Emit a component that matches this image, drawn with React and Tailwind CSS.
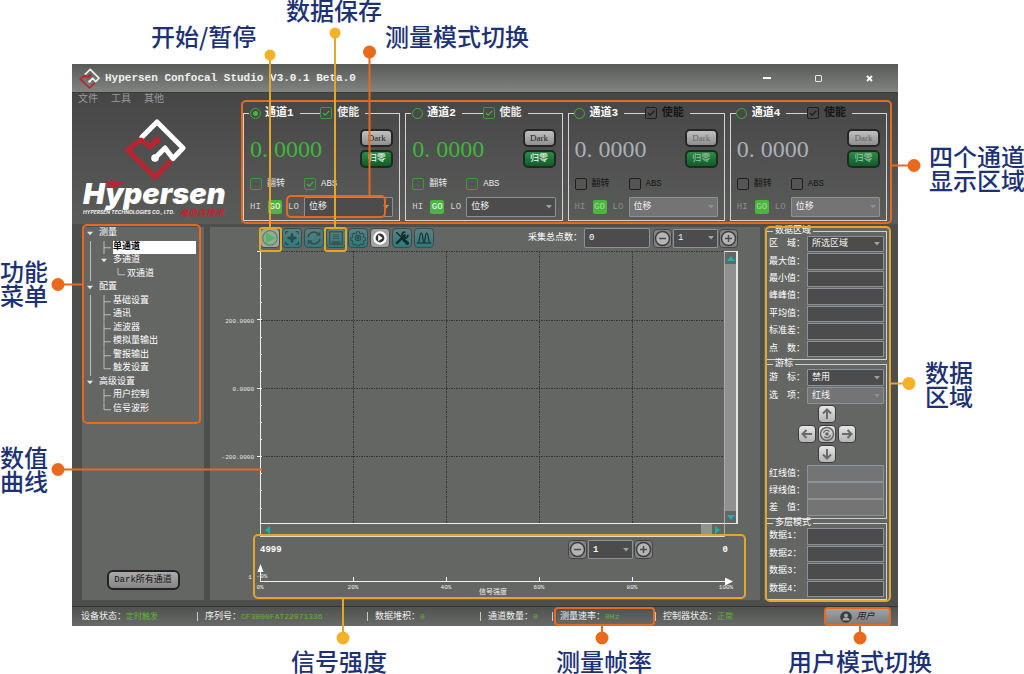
import React, { useState } from "react";

const MONO = "font-['Liberation_Mono','Noto_Sans_CJK_SC',monospace]";

function Tick({ name, label, checked = false, tone = "green", size = "small" }) {
  const box = tone === "green" ? "border-[#3f9a3c]" : "border-[#1f1f1f]";
  const stroke = tone === "green" ? "#46b043" : "#1c1c1c";
  const big = size === "large";
  const ink = tone === "green" ? "text-[#e9e9e9]" : "text-[#161616]";
  return (
    <label className={`flex items-center gap-[5px] whitespace-nowrap ${ink} ${big ? "text-[11px] leading-3 font-bold" : "text-[9px] leading-3"}`}>
      <span className="grid h-3 w-3 shrink-0">
        <input
          type="checkbox"
          name={name}
          defaultChecked={checked}
          className={`peer col-start-1 row-start-1 h-3 w-3 appearance-none rounded-[2px] border ${box}`}
        />
        <svg viewBox="0 0 12 12" className="pointer-events-none col-start-1 row-start-1 h-3 w-3 opacity-0 peer-checked:opacity-100">
          <path d="M3 6l2.2 2.2L9.4 3.6" fill="none" stroke={stroke} strokeWidth="1.2" />
        </svg>
      </span>
      {label}
    </label>
  );
}

function Drop({ label, value, className = "", dim = false }) {
  return (
    <span className={`grid ${className}`}>
      <select
        aria-label={label}
        defaultValue={value}
        className={`col-start-1 row-start-1 h-full w-full min-w-0 appearance-none rounded-[1px] border border-[#8d929a] pl-1 text-[9px] leading-3 text-[#f2f2f2] ${dim ? "bg-[#747474]" : "bg-[#4c4c4c]"}`}
      >
        <option>{value}</option>
      </select>
      <svg viewBox="0 0 6 4" className="pointer-events-none col-start-1 row-start-1 mr-1 h-1 w-[6px] self-center justify-self-end">
        <path d="M0 0h6L3 3.5z" fill={dim ? "#8f8f8f" : "#a0a0a0"} />
      </svg>
    </span>
  );
}

const channels = [
  { n: 1, active: true, enabled: true, abs: true },
  { n: 2, active: false, enabled: true, abs: false },
  { n: 3, active: false, enabled: false, abs: false },
  { n: 4, active: false, enabled: false, abs: false },
];

function Channel({ n, active, enabled, abs }) {
  const tone = enabled ? "green" : "black";
  return (
    <section className="flex min-w-0 flex-1 flex-col">
      <div className="z-10 flex h-3 items-center">
        <i className="h-px w-[6px] bg-[#d4d4d4]" />
        <label className="flex items-center gap-1 text-[11px] leading-3 font-bold text-white">
          <span className="grid h-3 w-3 place-items-center">
            <input type="radio" name="channel" defaultChecked={active} className="peer col-start-1 row-start-1 h-[11px] w-[11px] appearance-none rounded-full border border-[#3bb039]" />
            <i className="pointer-events-none col-start-1 row-start-1 h-[5px] w-[5px] rounded-full bg-[#43b740] opacity-0 peer-checked:opacity-100" />
          </span>
          <span>通道{n}</span>
        </label>
        <i className="ml-[6px] h-px flex-1 bg-[#d4d4d4]" />
        <Tick name={`enable${n}`} label="使能" checked tone={tone} size="large" />
        <i className="ml-[6px] h-px w-[35px] bg-[#d4d4d4]" />
      </div>
      <div className="-mt-[6px] flex flex-1 flex-col border-x border-b border-[#d4d4d4] pt-4 pr-[6px] pl-[6px]">
        <div className="flex h-[39px] items-center justify-between">
          <output className={`font-['Liberation_Serif',serif] text-[24px] leading-6 ${enabled ? "text-[#3db63a]" : "text-[#a9b0b8]"}`}>
            0.<span className="pl-[6px]">0000</span>
          </output>
          <div className="flex flex-col gap-[3px]">
            <button className={`h-[18px] w-[33px] rounded-[5px] border-2 border-[#262626] bg-linear-to-b from-[#c0c0c0] to-[#8f8f8f] font-['Liberation_Serif',serif] text-[9px] leading-3 ${enabled ? "text-[#222]" : "text-[#666]"}`}>Dark</button>
            <button className={`h-[18px] w-[33px] rounded-[5px] border-2 border-[#1d2b20] bg-linear-to-b from-[#2f8a48] to-[#125c2b] text-[9px] leading-3 ${enabled ? "text-white" : "text-[#a9c8b0]"}`}>归零</button>
          </div>
        </div>
        <div className="mt-[10px] flex h-3 items-center">
          <span className="w-[54px]"><Tick name={`flip${n}`} label="翻转" tone={tone} /></span>
          <Tick name={`abs${n}`} label="ABS" checked={abs} tone={tone} />
        </div>
        <div className={`mt-[7px] flex h-5 items-center text-[9px] leading-3 ${enabled ? "text-[#d0d0d0]" : "text-[#8c8c8c]"}`}>
          <span className="w-[18px]">HI</span>
          <span className={`h-[14px] w-[14px] rounded-[2px] bg-[#49b63c] text-center leading-[14px] ${enabled ? "text-white" : "text-[#a5dc9e]"}`}>GO</span>
          <span className="w-[22px] pl-[6px]">LO</span>
          <Drop label={`通道${n} 测量模式`} value="位移" dim={!enabled} className="h-5 flex-1" />
        </div>
      </div>
    </section>
  );
}

function Mark({ className, plain = "#fff" }) {
  return (
    <svg viewBox="0 0 62 62" className={className} fill="none" strokeWidth="5" strokeLinecap="round" strokeLinejoin="round">
      <path d="M18 19L33 4l26 26-10 10.500L41 30l-9.500 9.500" stroke={plain} />
      <path d="M32 22.500L26.500 29 17 22 3.500 32 31 59l14.500-14.500" stroke="#b9252f" />
      <circle cx="32.500" cy="22.500" r="3.800" fill="#b9252f" />
      <circle cx="31" cy="40" r="3.800" fill={plain} />
    </svg>
  );
}

const tree = [
  { t: "测量", d: 0, open: true },
  { t: "单通道", d: 1, selected: true, rail: true },
  { t: "多通道", d: 1, open: true, rail: true },
  { t: "双通道", d: 2, last: true, rail: true },
  { t: "配置", d: 0, open: true },
  { t: "基础设置", d: 1, rail: true },
  { t: "通讯", d: 1, rail: true },
  { t: "滤波器", d: 1, rail: true },
  { t: "模拟量输出", d: 1, rail: true },
  { t: "警报输出", d: 1, rail: true },
  { t: "触发设置", d: 1, last: true, rail: true },
  { t: "高级设置", d: 0, open: true },
  { t: "用户控制", d: 1 },
  { t: "信号波形", d: 1, last: true },
];

function Branch({ open, last }) {
  return (
    <svg viewBox="0 0 14 14" preserveAspectRatio="none" className="h-full w-[14px] shrink-0">
      {open ? (
        <path d="M2 5h6L5 8.5z" fill="#e4e4e4" />
      ) : (
        <path d={last ? "M5 0v7h7" : "M5 0v14M5 7h7"} fill="none" stroke="#bdbdbd" />
      )}
    </svg>
  );
}

function Sidebar() {
  const [picked, setPicked] = useState("单通道");
  return (
    <nav className="flex w-[122px] shrink-0 flex-col items-center justify-between bg-[#646664] pb-[10px]">
      <ul className="flex h-[189px] w-full flex-col pl-[3px]">
        {tree.map((r) => (
          <li key={r.t} className="flex min-h-0 flex-1 items-center">
            {r.d > 0 && (
              <span className="flex h-full w-[14px] shrink-0 pl-[5px]">{r.rail && <i className="w-px bg-[#bdbdbd]" />}</span>
            )}
            {r.d > 1 && <span className="w-[14px] shrink-0" />}
            <Branch open={r.open} last={r.last} />
            <button
              onClick={() => setPicked(r.t)}
              className={`h-[13px] text-left text-[9px] leading-[13px] whitespace-nowrap ${picked === r.t ? "mr-2 flex-1 bg-white font-bold text-black" : "text-white"}`}
            >
              {r.t}
            </button>
          </li>
        ))}
      </ul>
      <button className="h-5 w-[73px] rounded-[6px] border-2 border-[#222] bg-linear-to-b from-[#ababab] to-[#858585] text-[9px] leading-3 text-[#141414]">Dark所有通道</button>
    </nav>
  );
}

const tools = [
  { name: "开始", tone: "gray", art: <><circle cx="10" cy="10" r="8" fill="#9aa89a" stroke="#3f8e4c" strokeWidth="1.2" /><path d="M5.500 4l11 6-11 6z" fill="#56b566" /></> },
  { name: "居中", tone: "teal", art: <g fill="none" stroke="#1c4548" strokeWidth="1.1"><path d="M3 6V3h3M14 3h3v3M17 14v3h-3M6 17H3v-3M10 5v10M5 10h10" /><path d="M10 5l1.500 2h-3zM10 15l-1.500-2h3zM5 10l2-1.500v3zM15 10l-2 1.500v-3z" fill="#1c4548" strokeWidth="0.500" /><circle cx="10" cy="10" r="2.200" /></g> },
  { name: "刷新", tone: "teal", art: <g fill="none" stroke="#3b4c4c" strokeWidth="2"><path d="M3.500 9a6.500 6.500 0 0 1 11.500-3M16.500 11a6.500 6.500 0 0 1-11.500 3" /><path d="M12 7.500h5v-5zM8 12.500H3v5z" fill="#3b4c4c" stroke="none" /></g> },
  { name: "保存", tone: "teal", art: <g fill="none" stroke="#3d5453" strokeWidth="1.500"><path d="M3 3h14v14H3z" /><path d="M6.500 6.500h7M6.500 8.500h7M6.500 10.500h7" strokeWidth="1" /><path d="M6 17v-3h8v3" fill="#3d5453" /></g> },
  { name: "设置", tone: "teal", art: <g fill="none" stroke="#285153" strokeWidth="1.300" strokeLinejoin="round"><path d="M8.500 2.500h3l.5 2 1.600.7 1.800-1.100 2 2-1 1.800.6 1.600 2 .5v3l-2 .5-.6 1.500 1 1.800-2 2-1.800-1-1.600.6-.5 1.600h-3l-.5-1.600-1.600-.6-1.800 1-2-2 1-1.800-.6-1.500-2-.5v-3l2-.5.6-1.600-1-1.800 2-2 1.800 1.100L8 4.500z" transform="translate(1 .8) scale(.9)" /><circle cx="10" cy="10" r="3" /><circle cx="10" cy="10" r="1" fill="#285153" /></g> },
  { name: "播放", tone: "gray", art: <><circle cx="10" cy="10" r="6.200" fill="#333" stroke="#fff" strokeWidth="2.600" /><path d="M8 6.500l5 3.500-5 3.500z" fill="#fff" /></> },
  { name: "工具", tone: "teal", art: <g stroke="#152a2c" strokeLinecap="round" fill="none"><path d="M4 4l5 5" strokeWidth="1.500" /><path d="M11 11l5 5" strokeWidth="3.500" /><path d="M4.500 15.500L13 7" strokeWidth="2.600" /><path d="M13 3.500a3.200 3.200 0 1 0 3.500 3.500" strokeWidth="2" /></g> },
  { name: "波形", tone: "teal", art: <path d="M2 15.500h1.500C5 15.500 5 4.500 7 4.500s1.500 11 3 11 1-11 3-11 2 11 3.500 11H18M2 15.500h16" fill="none" stroke="#122a2c" strokeWidth="1.200" /> },
];

function RoundButton({ sign }) {
  return (
    <button aria-label={sign === "+" ? "增加" : "减少"} className="h-[19px] w-[19px] rounded-[4px] border border-[#444] bg-[#828382]">
      <svg viewBox="0 0 17 17" className="h-full w-full" fill="none">
        <circle cx="8.500" cy="8.500" r="7" fill="#b4b4b4" stroke="#3d3d3d" strokeWidth="1.500" />
        <path d={sign === "+" ? "M5 8.500h7M8.500 5v7" : "M5 8.500h7"} stroke="#4b4b4b" strokeWidth="1.500" />
      </svg>
    </button>
  );
}

function Stepper({ label }) {
  return (
    <div className="flex h-[19px] items-center gap-px">
      <RoundButton sign="-" />
      <Drop label={label} value="1" className="h-[19px] w-[45px]" />
      <RoundButton sign="+" />
    </div>
  );
}

function Plot() {
  const minor = Array.from({ length: 16 }, (_, i) => Math.round(i * 17.1));
  return (
    <svg viewBox="0 0 514 273" className="min-w-0 flex-1" role="img" aria-label="数值曲线">
      <g stroke="#343634" strokeDasharray="2 1 1 1" shapeRendering="crispEdges">
        {[143, 236, 329, 422].map((x) => <path key={x} d={`M${x}.5 0V272`} />)}
        {[0, 69, 137, 205].map((y) => <path key={y} d={`M51 ${y}.5H514`} />)}
      </g>
      <g stroke="#f1f1f1" shapeRendering="crispEdges">
        <path d="M50.500 0V273M50 272.500H514" />
        {minor.map((y, i) => <path key={y} d={`M${i % 4 ? 50 : 47} ${y}.5H52`} />)}
      </g>
      <g fill="#e8e8e8" fontSize="6" textAnchor="end">
        <text x="44" y="72">200.0000</text>
        <text x="44" y="140">0.0000</text>
        <text x="44" y="208">-200.0000</text>
      </g>
    </svg>
  );
}

function Strength() {
  return (
    <svg viewBox="0 0 550 37" className="block w-full" role="img" aria-label="信号强度">
      <g stroke="#f4f4f4" fill="#fff" shapeRendering="crispEdges">
        <path d="M50.500 8V21.500H516" fill="none" />
        {[143, 236, 329, 422].map((x) => <path key={x} d={`M${x}.5 17v4`} />)}
      </g>
      <path d="M50.500 4l-3 8h6zM523 21.500l-8-4v8z" fill="#fff" />
      <g fill="#efefef" fontSize="6" textAnchor="middle">
        <text x="40" y="19">1</text>
        <text x="52" y="18">-0%</text>
        <text x="50" y="29">0%</text>
        <text x="143" y="29">20%</text>
        <text x="236" y="29">40%</text>
        <text x="329" y="29">60%</text>
        <text x="422" y="29">80%</text>
        <text x="516" y="29">100%</text>
        <text x="283" y="34" fontSize="7">信号强度</text>
      </g>
    </svg>
  );
}

function Center() {
  return (
    <main className="flex min-w-0 flex-1 flex-col bg-[#646664] pt-px">
      <div className="flex h-5 items-center pr-[22px] pl-[50px]">
        <div className="flex gap-[2px]">
          {tools.map((t) => (
            <button key={t.name} aria-label={t.name} className={`h-5 w-5 rounded-[4px] border border-[#3f4a4a] ${t.tone === "teal" ? "bg-linear-to-b from-[#598080] to-[#2d797b]" : "bg-[#a3a3a3]"}`}>
              <svg viewBox="0 0 20 20" className="h-full w-full">{t.art}</svg>
            </button>
          ))}
        </div>
        <label className="ml-auto flex items-center gap-[2px] text-[9px] leading-3 text-white">
          采集总点数：
          <input defaultValue="0" className="h-5 w-[66px] rounded-[2px] border border-[#8d929a] bg-[#4c4c4c] pl-1 text-[9px] text-white" />
        </label>
        <div className="ml-[3px]"><Stepper label="横轴倍率" /></div>
      </div>
      <div className="mt-[3px] flex pr-[22px]">
        <Plot />
        <div className="flex w-[14px] flex-col items-center border border-r-2 border-[#e4e4e4] border-l-[#a8a8a8]">
          <button aria-label="向上滚动" className="flex h-3 w-full items-center justify-center"><svg viewBox="0 0 8 5" className="h-[5px] w-2"><path d="M4 0l4 5H0z" fill="#18b3b0" /></svg></button>
          <i className="w-full flex-1 bg-[#8f908f]" />
          <button aria-label="向下滚动" className="flex h-3 w-full items-center justify-center"><svg viewBox="0 0 8 5" className="h-[5px] w-2"><path d="M0 0h8L4 5z" fill="#18b3b0" /></svg></button>
        </div>
      </div>
      <div className="mr-[35px] ml-[50px] flex h-[13px] items-center border-r border-b border-l border-[#dcdcdc] border-r-[#a8a8a8] px-1">
        <button aria-label="向左滚动"><svg viewBox="0 0 5 8" className="block h-2 w-[5px]"><path d="M5 0v8L0 4z" fill="#18b3b0" /></svg></button>
        <i className="ml-auto h-3 w-[11px] bg-[#939393]" />
        <button aria-label="向右滚动" className="ml-[3px]"><svg viewBox="0 0 5 8" className="block h-2 w-[5px]"><path d="M0 0v8l5-4z" fill="#18b3b0" /></svg></button>
      </div>
      <div className="mt-[3px] flex h-[19px] items-center pr-[32px] pl-[50px] text-[9px] leading-3 font-bold text-white">
        <span className="flex-1">4999</span>
        <Stepper label="强度倍率" />
        <span className="w-[75px] text-right">0</span>
      </div>
      <div className="mt-px"><Strength /></div>
    </main>
  );
}

function Group({ title, children, className = "" }) {
  return (
    <fieldset className={`mx-[2px] min-w-0 border border-[#d0d0d0] border-l-transparent px-[2px] pb-[2px] ${className}`}>
      <legend className="ml-1 h-[9px] px-[2px] text-[9px] leading-[9px] text-white">{title}</legend>
      {children}
    </fieldset>
  );
}

function Field({ label, dim = false, choice }) {
  return (
    <label className="flex min-h-0 flex-1 items-center text-[9px] leading-3 text-white">
      <span className="w-[38px] shrink-0 whitespace-nowrap">{label}</span>
      {choice ? (
        <Drop label={label} value={choice} dim={dim} className="h-full flex-1" />
      ) : (
        <input disabled={dim} className={`h-full min-w-0 flex-1 border border-[#8d929a] ${dim ? "bg-[#747474]" : "bg-[#4c4c4c]"}`} />
      )}
    </label>
  );
}

function PadButton({ name, d, className }) {
  return (
    <button aria-label={name} className={`h-[18px] w-[18px] rounded-[4px] border border-[#3d3d3d] bg-linear-to-b from-[#e6e6e6] to-[#b4b4b4] ${className}`}>
      <svg viewBox="0 0 16 16" className="h-full w-full" fill="none" stroke="#6a6a6a" strokeWidth="2">
        {d ? <path d={d} /> : <><circle cx="8" cy="8" r="6.500" strokeWidth="1.500" /><path d="M4.500 7a3.500 3.500 0 0 1 6-1.500M11.500 9a3.500 3.500 0 0 1-6 1.500" strokeWidth="1.200" /><circle cx="8" cy="8" r="1.800" fill="#6a6a6a" stroke="none" /></>}
      </svg>
    </button>
  );
}

function DataPanel() {
  return (
    <aside className="flex w-[125px] shrink-0 flex-col bg-[#646664]">
      <Group title="数据区域">
        <div className="flex h-[121px] flex-col gap-px">
          <Field label="区　域：" choice="所选区域" />
          {["最大值：", "最小值：", "峰峰值：", "平均值：", "标准差：", "点　数："].map((l) => <Field key={l} label={l} />)}
        </div>
      </Group>
      <Group title="游标">
        <div className="flex h-[35px] flex-col gap-px">
          <Field label="游　标：" choice="禁用" />
          <Field label="选　项：" choice="红线" dim />
        </div>
        <div className="mx-auto mt-px mb-[2px] grid w-[58px] grid-cols-3 gap-[2px]">
          <PadButton name="上" d="M8 13V4M4 7.500L8 3.500l4 4" className="col-start-2" />
          <PadButton name="左" d="M13 8H4M7.500 4L3.500 8l4 4" className="col-start-1" />
          <PadButton name="复位" />
          <PadButton name="右" d="M3 8h9M8.500 4l4 4-4 4" />
          <PadButton name="下" d="M8 3v9M4 8.500l4 4 4-4" className="col-start-2" />
        </div>
        <div className="flex h-[51px] flex-col">
          {["红线值：", "绿线值：", "差　值："].map((l) => <Field key={l} label={l} dim />)}
        </div>
      </Group>
      <Group title="多层模式">
        <div className="flex h-[69px] flex-col gap-px">
          {["数据1：", "数据2：", "数据3：", "数据4："].map((l) => <Field key={l} label={l} />)}
        </div>
      </Group>
    </aside>
  );
}

function Status({ name, value, className, first }) {
  return (
    <div className={`flex items-center whitespace-nowrap ${className}`}>
      {!first && <i className="mr-[7px] h-[9px] w-px bg-[#c8c8c8]" />}
      <span>{name}：</span>
      <span className="text-[8px] text-[#5fb52e]">{value}</span>
    </div>
  );
}

function Note({ children, className }) {
  return (
    <p className={`absolute font-['Noto_Sans_CJK_SC',sans-serif] text-[24px] leading-6 font-medium whitespace-nowrap text-[#1d3175] ${className}`}>{children}</p>
  );
}

function Callouts() {
  return (
    <>
      <svg viewBox="0 0 1024 674" className="pointer-events-none absolute inset-0 z-20 h-[674px] w-[1024px]" fill="none" strokeWidth="2">
        <g stroke="#e5691f">
          <rect x="242" y="101" width="649" height="122" rx="4" />
          <rect x="287" y="196" width="98" height="21" rx="4" />
          <rect x="83" y="225" width="117" height="198" rx="4" />
          <rect x="555" y="608" width="99" height="17" rx="3" />
          <rect x="825" y="608" width="65" height="17" rx="3" />
          <path d="M369.500 52V196M891 165.500h20M58 284.500h25M58 469.500h204M602 625v12M860 625v12" />
        </g>
        <g stroke="#e2a62b">
          <rect x="260" y="228" width="21" height="23" rx="2" />
          <rect x="325" y="228" width="21" height="23" rx="2" />
          <rect x="254" y="535" width="491" height="63" rx="4" />
          <rect x="766" y="227" width="124" height="374" rx="4" />
          <path d="M270 55V228M335 36V228M890 383.500h18M343 598v40" />
        </g>
        <g fill="#e96a1d" stroke="none">
          <circle cx="369.500" cy="52" r="6.500" /><circle cx="914" cy="165.500" r="6.500" /><circle cx="58" cy="284.500" r="6.500" />
          <circle cx="58" cy="469.500" r="6.500" /><circle cx="602" cy="638" r="6.500" /><circle cx="860" cy="638" r="6.500" />
        </g>
        <g fill="#f3b229" stroke="none">
          <circle cx="270" cy="55" r="5.500" /><circle cx="335" cy="33" r="5.500" /><circle cx="909" cy="383.500" r="6.500" /><circle cx="343" cy="638" r="6.500" />
        </g>
      </svg>
      <Note className="-top-[2px] left-[286px]">数据保存</Note>
      <Note className="top-6 left-[151px]">开始/暂停</Note>
      <Note className="top-6 left-[385px]">测量模式切换</Note>
      <Note className="top-36 left-[929px]">四个通道<br />显示区域</Note>
      <Note className="top-[259px] left-0">功能<br />菜单</Note>
      <Note className="top-[445px] left-0">数值<br />曲线</Note>
      <Note className="top-[360px] left-[925px]">数据<br />区域</Note>
      <Note className="top-[649px] left-[291px]">信号强度</Note>
      <Note className="top-[649px] left-[556px]">测量帧率</Note>
      <Note className="top-[649px] left-[788px]">用户模式切换</Note>
    </>
  );
}

export default function App() {
  return (
    <div className={`relative min-h-[674px] overflow-x-hidden bg-white pt-16 pr-[126px] pl-[72px] ${MONO}`}>
      <div className="flex flex-col bg-[#4d4f4d]">
        <header className="flex h-7 items-center bg-linear-to-b from-[#595b59] to-[#828482] px-[7px]">
          <Mark className="h-[21px] w-[21px]" plain="#eee" />
          <h1 className="ml-[5px] text-[11px] leading-4 font-bold text-[#f0f0f0]">Hypersen Confocal Studio V3.0.1 Beta.0</h1>
          <div className="ml-auto flex items-center gap-[44px] pr-[18px]">
            <button aria-label="最小化"><i className="block h-[2px] w-2 bg-white" /></button>
            <button aria-label="最大化"><i className="block h-[7px] w-[7px] rounded-[1px] border border-[#e8e8e8]" /></button>
            <button aria-label="关闭"><svg viewBox="0 0 7 7" className="block h-[7px] w-[7px]"><path d="M1 1l5 5M6 1L1 6" stroke="#fff" strokeWidth="1.800" /></svg></button>
          </div>
        </header>

        <div className="flex h-[132px] border-t border-[#3b3b3b] bg-linear-to-b from-[#464646] to-[#5a5c5a] pr-[11px]">
          <div className="flex w-[171px] shrink-0 flex-col">
            <nav className="flex h-[14px] gap-[13px] pl-[6px] text-[10px] leading-[14px] text-[#9a9a9a]">
              <button>文件</button><button>工具</button><button>其他</button>
            </nav>
            <Mark className="mt-[11px] ml-[52px] h-[62px] w-[62px]" />
            <svg viewBox="0 0 171 40" className="h-10 w-[171px] overflow-visible" role="img" aria-label="Hypersen">
              <g fontFamily="Inter, 'Liberation Sans', sans-serif" fontStyle="italic">
                <text x="11" y="24" fontSize="29" fontWeight="900" fill="#fff">Hypersen</text>
                <path d="M34 2h18l-8 6h-6z" fill="#b9252f" />
                <text x="11" y="34" fontSize="5" fontWeight="700" fill="#eee">HYPERSEN TECHNOLOGIES CO., LTD.</text>
              </g>
              <text x="107" y="36" fontSize="9" fontWeight="700" fontStyle="italic" fill="#c0252f">海伯森技术</text>
            </svg>
          </div>
          <div className="flex min-w-0 flex-1 gap-[5px] pt-[14px] pb-[3px]">
            {channels.map((c) => <Channel key={c.n} {...c} />)}
          </div>
        </div>

        <div className="flex pt-[3px] pr-[9px] pl-[10px]">
          <Sidebar />
          <span className="w-[6px] shrink-0" />
          <Center />
          <span className="w-1 shrink-0" />
          <DataPanel />
        </div>

        <footer className="mt-[6px] flex h-5 items-center border-t border-[#353535] bg-linear-to-b from-[#505250] to-[#686a68] pr-2 pl-[9px] text-[9px] leading-3 text-[#f0f0f0]">
          <Status first name="设备状态" value="定时触发" className="w-[116px]" />
          <Status name="序列号" value="CF3000FAT22071336" className="w-[170px]" />
          <Status name="数据堆积" value="0" className="w-[113px]" />
          <Status name="通道数量" value="0" className="w-[72px]" />
          <Status name="测量速率" value="0Hz" className="w-[103px]" />
          <Status name="控制器状态" value="正常" className="w-[90px]" />
          <button className="ml-auto flex h-[17px] w-[65px] items-center justify-center gap-1 rounded-[3px] bg-linear-to-b from-[#a5a5a5] to-[#7b7b7b] text-[9px] leading-3 text-[#222] italic">
            <svg viewBox="0 0 12 12" className="h-3 w-3"><circle cx="6" cy="6" r="5.800" fill="#3c3c3c" /><circle cx="6" cy="4.500" r="2" fill="#a5a5a5" /><path d="M2.500 9.500a3.500 3 0 0 1 7 0z" fill="#a5a5a5" /></svg>
            用户
          </button>
        </footer>
      </div>
      <Callouts />
    </div>
  );
}
